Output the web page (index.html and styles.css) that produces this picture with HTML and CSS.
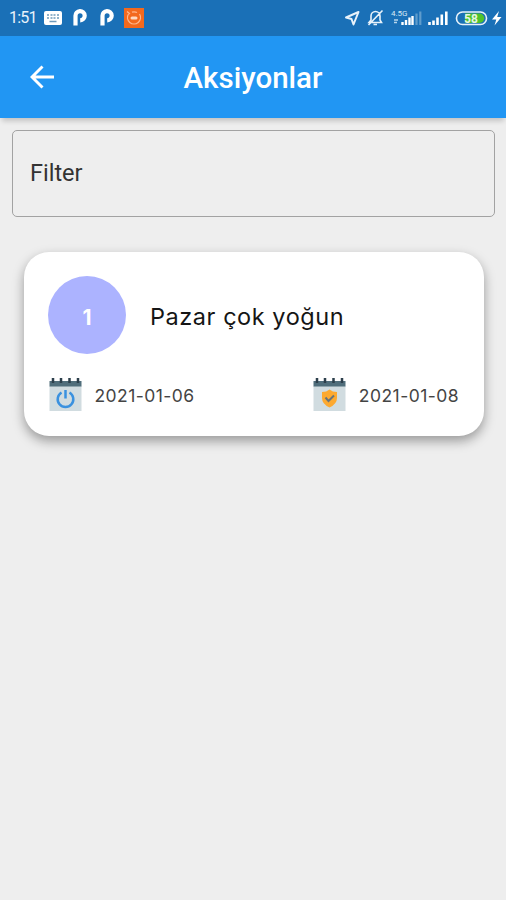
FILE: index.html
```html
<!DOCTYPE html>
<html lang="tr">
<head>
  <meta charset="UTF-8">
  <meta name="viewport" content="width=device-width, initial-scale=1.0">
  <title>Aksiyonlar</title>
  <link rel="stylesheet" href="styles.css">
</head>
<body>
  <div class="status-bar">
    <span class="clock">1:51</span>
    <svg class="keyboard" width="18" height="14" viewBox="0 0 18 14">
      <rect width="18" height="14" rx="2" fill="#fff"/>
      <path d="M3 4h2m1.500 0h2m1 0h2m1.500 0h2M3 7h2m1.500 0h2m1 0h2m1.500 0h2M5.500 10.500h7" stroke="#6f9abb" stroke-width="1.500"/>
    </svg>
    <svg class="p-icon" width="14" height="18" viewBox="0 0 14 18">
      <path d="M2.500 16.500V7A4.600 4.600 0 1 1 7.200 11.300" fill="none" stroke="#fff" stroke-width="4.200"/>
    </svg>
    <svg class="p-icon second" width="14" height="18" viewBox="0 0 14 18">
      <path d="M2.500 16.500V7A4.600 4.600 0 1 1 7.200 11.300" fill="none" stroke="#fff" stroke-width="4.200"/>
    </svg>
    <svg class="app-icon" width="20" height="20" viewBox="0 0 20 20">
      <rect width="20" height="20" fill="#f3691d"/>
      <path d="M4.500 6A6.500 6.500 0 1 0 15.500 6M8 4.200A6.500 6.500 0 0 1 13 4.500M3 3.500l3 2.500" fill="none" stroke="#ffb78b" stroke-width="1.300"/>
      <rect x="6.500" y="8.500" width="7" height="3" rx="1.500" fill="#ffd9c0"/>
    </svg>
    <svg class="status-right" width="162" height="24" viewBox="344 6 162 24">
      <path d="M358.500 12L353.500 24.500L351.500 19L346 17.500Z" fill="none" stroke="#e8f2fa" stroke-width="2" stroke-linejoin="round"/>
      <path d="M369 22.500h12.500l-1.500-2.500v-4a4.500 4.500 0 0 0-9 0v4zM373.500 24.500h3.500M368.500 25L382.500 10.500" fill="none" stroke="#e8f2fa" stroke-width="1.600"/>
      <text x="391" y="15.500" class="network">4.5G</text>
      <path d="M394 20h4m-4 2.500h3" stroke="#b8d5eb" stroke-width="1.500"/>
      <path d="M402.500 25v-3M406 25v-5M409.500 25v-7.500M412.500 25v-9" stroke="#fff" stroke-width="2.400"/>
      <path d="M416.500 25V13.500M420.300 25V11.500" stroke="#5f9ccc" stroke-width="2.200"/>
      <path d="M429.500 25v-3M433.500 25v-4.500M437.500 25v-7.500M441.800 25V14.500M446.300 25V11.500" stroke="#fff" stroke-width="2.600"/>
      <rect x="456.500" y="12" width="30" height="12.500" rx="6" fill="#1b71b5" stroke="#e8f2fa" stroke-width="1.600"/>
      <path d="M465 13.500h14.500a4.700 4.700 0 0 1 0 9.500H465z" fill="#4fc32b"/>
      <text x="464" y="22.500" class="battery">58</text>
      <path d="M499 11l-7 8.500h4.300l-1.800 6 7-8.500h-4.300z" fill="#fff"/>
    </svg>
  </div>

  <header class="app-bar">
    <svg class="back" width="24" height="24" viewBox="0 0 24 24">
      <path d="M24 12H2M12.500 1.500L2 12l10.500 10.500" fill="none" stroke="#fff" stroke-width="2.900"/>
    </svg>
    <h1 class="title">Aksiyonlar</h1>
  </header>

  <main class="content">
    <div class="filter">Filter</div>

    <section class="card">
      <div class="card-head">
        <div class="number">1</div>
        <h2 class="card-title">Pazar çok yoğun</h2>
      </div>
      <div class="dates">
        <div class="date">
          <svg width="33" height="33" viewBox="0 0 33 33">
            <path d="M.5 8h32v25H.5z" fill="#d1dce0"/>
            <path d="M.5 3h32v5.500H.5z" fill="#506e7b"/>
            <path d="M4 0v5M12 0v5M20.500 0v5M29 0v5" stroke="#2c3f4b" stroke-width="2.500"/>
            <path d="M12.500 14.500a7.800 7.800 0 1 0 8 0M16.500 12v8.500" fill="none" stroke="#3a91df" stroke-width="2.500"/>
          </svg>
          <span>2021-01-06</span>
        </div>
        <div class="date">
          <svg width="33" height="33" viewBox="0 0 33 33">
            <path d="M.5 8h32v25H.5z" fill="#d1dce0"/>
            <path d="M.5 3h32v5.500H.5z" fill="#506e7b"/>
            <path d="M4 0v5M12 0v5M20.500 0v5M29 0v5" stroke="#2c3f4b" stroke-width="2.500"/>
            <path d="M16.500 11.500q3 2.500 7.500 2.500v6q0 6-7.500 9.500q-7.500-3.500-7.500-9.500v-6q4.500 0 7.500-2.500z" fill="#fda92f"/>
            <path d="M12.500 19.500l3 3.500 5.500-5.500" fill="none" stroke="#68747a" stroke-width="2"/>
          </svg>
          <span>2021-01-08</span>
        </div>
      </div>
    </section>
  </main>
</body>
</html>
```

FILE: styles.css
```css
* {
  box-sizing: border-box;
}
body {
  margin: 0;
  min-height: 900px;
  background-color: #eee;
  font-family: Roboto, sans-serif;
}
.status-bar {
  display: flex;
  align-items: center;
  height: 36px;
  padding-left: 9px;
  background-color: #1a70b7;
  color: #e8f2fa;
}
.clock {
  width: 35px;
  font-size: 16px;
  letter-spacing: -0.8px;
  line-height: 38px;
}
.p-icon {
  margin-left: 11px;
}
.p-icon.second {
  margin-left: 13px;
}
.app-icon {
  margin-left: 10px;
}
.status-right {
  margin-left: auto;
}
.network {
  font-size: 8px;
  fill: #d6e7f4;
}
.battery {
  font-size: 12px;
  font-weight: bold;
  fill: #e5f5e5;
}
.app-bar {
  display: grid;
  grid-template-columns: 54px 1fr 54px;
  align-items: center;
  height: 82px;
  background-color: #2196f3;
  box-shadow: 0 5px 5px -2px rgba(0, 0, 0, 0.18);
}
.back {
  justify-self: end;
}
.title {
  margin: 1px 0 0;
  color: #fff;
  font-size: 29.5px;
  font-weight: 500;
  text-align: center;
}
.content {
  padding: 12px 11px 12px 12px;
}
.filter {
  display: flex;
  align-items: center;
  height: 87px;
  padding: 0 0 1px 17px;
  border: 1px solid #a2a2a2;
  border-radius: 5px;
  color: #333;
  font-size: 23.5px;
}
.card {
  height: 184px;
  margin: 35px 11px 0 12px;
  padding: 24px;
  background-color: #fff;
  border-radius: 25px;
  box-shadow: 0 5px 12px rgba(0, 0, 0, 0.36);
  font-family: Inter, sans-serif;
}
.card-head {
  display: flex;
  align-items: center;
  gap: 24px;
}
.number {
  width: 78px;
  height: 78px;
  background-color: #acb3ff;
  border-radius: 50%;
  color: #fff;
  font-size: 21px;
  font-weight: bold;
  line-height: 83px;
  text-align: center;
}
.card-title {
  margin: 3px 0 0;
  color: #151515;
  font-size: 23.5px;
  font-weight: 400;
  letter-spacing: 0.55px;
}
.dates {
  display: flex;
  justify-content: space-between;
  margin: 24px 1px 0 1px;
}
.date {
  display: flex;
  align-items: center;
  gap: 12.5px;
  color: #444;
  font-size: 17.5px;
  letter-spacing: 0.45px;
}
.date span {
  padding-top: 2px;
}
```
